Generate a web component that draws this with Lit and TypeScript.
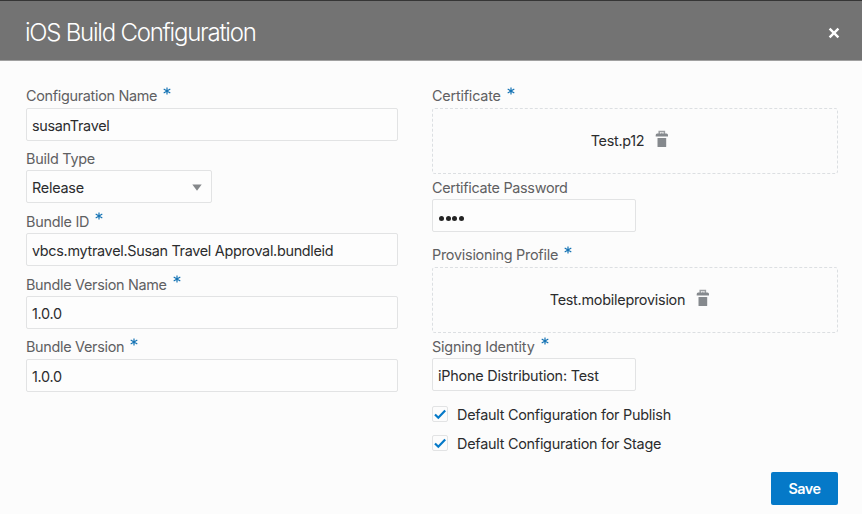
import { LitElement, html, css, svg, nothing } from "lit";
import { customElement, property } from "lit/decorators.js";

const trash = html`<svg class="trash" width="14" height="18" viewBox="0 0 14 18">
  <path d="M4.200 4V1.600h5.200V4M6.300 3.400h1" fill="none" stroke="#9a9da0" stroke-width="1.500" />
  <path d="M2.200 3.600h9.300a1.500 1.500 0 0 1 1.500 1.500v1.500H.7V5.100A1.500 1.500 0 0 1 2.200 3.600z" fill="#85898d" />
  <rect x="2.500" y="8" width="8.700" height="9" rx=".6" fill="#85898d" />
</svg>`;

@customElement("field-row")
class FieldRow extends LitElement {
  @property() label = "";
  @property({ type: Boolean }) required = false;
  static styles = css`
    :host { display: block; }
    .label {
      display: flex; height: 24px; line-height: 24px; color: #5f6062; white-space: nowrap;
      padding-top: var(--label-drop, 0px); box-sizing: border-box;
    }
    .star { width: 8px; height: 8px; margin: calc(3px - var(--label-drop, 0px)) 0 0 6px; flex: none; }
  `;
  render() {
    return html`<div class="label"><span>${this.label}</span>${this.required
        ? html`<svg class="star" viewBox="0 0 8 8">${svg`<path d="M4 .4v7.200M.7 2.100l6.600 3.800M.7 5.900l6.600-3.800" stroke="#1674b5" stroke-width="1.200"/>`}</svg>`
        : nothing}</div><slot></slot>`;
  }
}

@customElement("app-root")
class AppRoot extends LitElement {
  static styles = css`
    :host {
      display: block; height: 514px; box-sizing: border-box; background: #fcfcfc; overflow: hidden;
      font: 14.4px Inter, "Liberation Sans", sans-serif; letter-spacing: -0.25px; color: #2b2c2e;
    }
    * { box-sizing: border-box; }
    .header {
      height: 61px; background: #737373; border-top: 1px solid #353535; border-bottom: 1px solid #a0a0a0;
      display: flex; align-items: center; justify-content: space-between; padding: 0 22px 0 25px;
    }
    .title { color: #fff; font-size: 24px; font-weight: 300; letter-spacing: -1.24px; line-height: 30px; margin: 4px 0 0; }
    .close { display: block; margin-top: 4px; }
    .form { display: grid; grid-template-columns: 372px 406px; column-gap: 34px; padding: 23px 0 0 26px; }
    .left { display: grid; grid-template-rows: 62px 63px 63px 63px 57px; align-content: start; }
    .right { display: grid; grid-template-rows: 91px 68px 91px 58px auto; align-content: start; }
    .low { --label-drop: 1px; }
    .tight { letter-spacing: -0.3px; }
    .loose { letter-spacing: -0.2px; }
    .input {
      height: 33px; border: 1px solid #e2e3e4; border-radius: 2px; display: flex; align-items: center;
      padding: 2px 5px 0; white-space: nowrap; background: #fdfdfd;
    }
    .select { width: 186px; justify-content: space-between; padding-right: 9px; }
    .short { width: 204px; }
    .drop {
      display: flex; align-items: center; justify-content: center; height: 66px;
      border: 1px dashed #dcdfe2; border-radius: 3px; gap: 10.5px; padding: 0 10.5px 2px 0;
    }
    .trash { margin-bottom: 3px; }
    .dots { display: flex; gap: 1.5px; padding: 4px 0 0 1px; }
    .dot { width: 5px; height: 5px; border-radius: 50%; background: #242424; }
    .checks { display: grid; gap: 9px; padding-top: 12px; }
    .check { display: flex; align-items: center; height: 20px; gap: 9px; }
    .box { width: 16px; height: 16px; border: 1px solid #e2e3e4; border-radius: 2px; display: flex; }
    .footer { display: flex; justify-content: flex-end; padding: 19px 24px 0 0; }
    .save {
      width: 67px; height: 33px; padding: 0; border: 0; border-radius: 2px; background: #0579c8; color: #fff;
      font: 600 14.4px Inter, "Liberation Sans", sans-serif; letter-spacing: -0.5px;
    }
  `;
  check(label: string) {
    return html`<div class="check"><span class="box"><svg width="14" height="14" viewBox="0 0 14 14">
      <path d="M2 7.500l3.300 3.300L12.200 3.600" fill="none" stroke="#0579c8" stroke-width="2.200"/></svg></span>
      <span>${label}</span></div>`;
  }
  render() {
    return html`
      <header class="header">
        <h1 class="title">iOS Build Configuration</h1>
        <svg class="close" width="12" height="12" viewBox="0 0 12 12"><path d="M1.600 1.600l8.800 8.800M10.400 1.600l-8.800 8.800" stroke="#fff" stroke-width="2.400"/></svg>
      </header>
      <main class="form">
        <section class="left">
          <field-row class="tight" label="Configuration Name" required><div class="input">susanTravel</div></field-row>
          <field-row class="low" label="Build Type"><div class="input select">Release
            <svg width="10" height="7" viewBox="0 0 10 7"><path d="M.3.500h9.400L5 6.700z" fill="#85888b"/></svg></div></field-row>
          <field-row class="low" label="Bundle ID" required><div class="input tight">vbcs.mytravel.Susan Travel Approval.bundleid</div></field-row>
          <field-row class="low tight" label="Bundle Version Name" required><div class="input">1.0.0</div></field-row>
          <field-row class="tight" label="Bundle Version" required><div class="input">1.0.0</div></field-row>
        </section>
        <section class="right">
          <field-row class="loose" label="Certificate" required><div class="drop tight"><span>Test.p12</span>${trash}</div></field-row>
          <field-row class="low tight" label="Certificate Password"><div class="input short"><span class="dots">${[0, 1, 2, 3].map(() => html`<i class="dot"></i>`)}</span></div></field-row>
          <field-row label="Provisioning Profile" required><div class="drop"><span>Test.mobileprovision</span>${trash}</div></field-row>
          <field-row class="low loose" label="Signing Identity" required><div class="input short">iPhone Distribution: Test</div></field-row>
          <div class="checks">${this.check("Default Configuration for Publish")}${this.check("Default Configuration for Stage")}</div>
        </section>
      </main>
      <footer class="footer"><button class="save">Save</button></footer>`;
  }
}
